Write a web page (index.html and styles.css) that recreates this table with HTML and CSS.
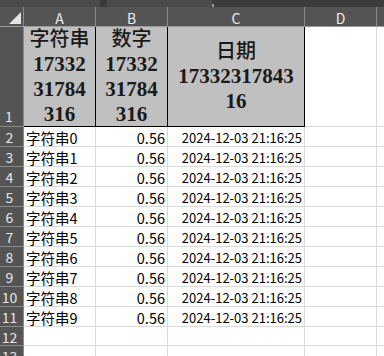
FILE: index.html
```html
<!DOCTYPE html>
<html>
<head>
<meta charset="utf-8">
<link rel="stylesheet" href="styles.css">
</head>
<body>
<div class="topbar">
  <div class="seg seg-name"></div>
  <div class="seg seg-gap"></div>
  <div class="seg seg-formula"></div>
  <div class="seg seg-tick"></div>
  <div class="seg seg-rest"></div>
</div>
<div class="sheet">
  <div class="ch corner"><span class="tri"></span></div>
  <div class="ch">A</div>
  <div class="ch">B</div>
  <div class="ch">C</div>
  <div class="ch">D</div>
  <div class="ch last"></div>

  <div class="rh rh1">1</div>
  <div class="hd"><div class="hd-text"><span class="cjk">字符串</span><br>17332<br>31784<br>316</div></div>
  <div class="hd"><div class="hd-text"><span class="cjk">数字</span><br>17332<br>31784<br>316</div></div>
  <div class="hd"><div class="hd-text"><span class="cjk">日期</span><br>17332317843<br>16</div></div>
  <div class="c"></div>
  <div class="c last"></div>

  <div class="rh">2</div><div class="c txt">字符串0</div><div class="c num">0.56</div><div class="c date">2024-12-03 21:16:25</div><div class="c"></div><div class="c last"></div>
  <div class="rh">3</div><div class="c txt">字符串1</div><div class="c num">0.56</div><div class="c date">2024-12-03 21:16:25</div><div class="c"></div><div class="c last"></div>
  <div class="rh">4</div><div class="c txt">字符串2</div><div class="c num">0.56</div><div class="c date">2024-12-03 21:16:25</div><div class="c"></div><div class="c last"></div>
  <div class="rh">5</div><div class="c txt">字符串3</div><div class="c num">0.56</div><div class="c date">2024-12-03 21:16:25</div><div class="c"></div><div class="c last"></div>
  <div class="rh">6</div><div class="c txt">字符串4</div><div class="c num">0.56</div><div class="c date">2024-12-03 21:16:25</div><div class="c"></div><div class="c last"></div>
  <div class="rh">7</div><div class="c txt">字符串5</div><div class="c num">0.56</div><div class="c date">2024-12-03 21:16:25</div><div class="c"></div><div class="c last"></div>
  <div class="rh">8</div><div class="c txt">字符串6</div><div class="c num">0.56</div><div class="c date">2024-12-03 21:16:25</div><div class="c"></div><div class="c last"></div>
  <div class="rh">9</div><div class="c txt">字符串7</div><div class="c num">0.56</div><div class="c date">2024-12-03 21:16:25</div><div class="c"></div><div class="c last"></div>
  <div class="rh">10</div><div class="c txt">字符串8</div><div class="c num">0.56</div><div class="c date">2024-12-03 21:16:25</div><div class="c"></div><div class="c last"></div>
  <div class="rh">11</div><div class="c txt">字符串9</div><div class="c num">0.56</div><div class="c date">2024-12-03 21:16:25</div><div class="c"></div><div class="c last"></div>
  <div class="rh">12</div><div class="c"></div><div class="c"></div><div class="c"></div><div class="c"></div><div class="c last"></div>
  <div class="rh">13</div><div class="c"></div><div class="c"></div><div class="c"></div><div class="c"></div><div class="c last"></div>
</div>
</body>
</html>
```

FILE: styles.css
```css
html, body {
  margin: 0;
  padding: 0;
  background: #ffffff;
  width: 384px;
  height: 356px;
  overflow: hidden;
}

.topbar {
  display: flex;
  height: 7px;
  background: #3c3c3c;
}
.seg { height: 7px; }
.seg-name { width: 100px; background: #4a4a4a; }
.seg-gap { width: 7px; background: #3a3a3a; }
.seg-formula { width: 105px; background: #4a4a4a; }
.seg-tick { width: 2px; background: #9a9a9a; height: 3px; align-self: flex-end; }
.seg-rest { flex: 1; background: #3c3c3c; }

.sheet {
  display: grid;
  grid-template-columns: 24px 72px 72px 137px 72px 1fr;
  grid-template-rows: 20px 100px repeat(10, 20px) 19px 20px;
  font-family: "Noto Sans CJK SC", "Noto Sans", sans-serif;
}

.sheet > div {
  box-sizing: border-box;
  border-right: 1px solid #d9d9d9;
  border-bottom: 1px solid #d9d9d9;
  overflow: hidden;
  white-space: nowrap;
}

.sheet > .ch {
  background: #545454;
  color: #ececec;
  font-size: 14px;
  display: flex;
  align-items: center;
  justify-content: center;
  padding-top: 3px;
  border-right: 1px solid #8a8a8a;
  border-bottom: 1px solid #9a9a9a;
}
.sheet > .ch.last { border-right: none; }

.corner { position: relative; }
.tri {
  position: absolute;
  right: 2px;
  bottom: 2px;
  width: 0;
  height: 0;
  border-left: 12px solid transparent;
  border-bottom: 12px solid #e4e4e4;
}

.sheet > .rh {
  background: #545454;
  color: #e6e6e6;
  font-size: 14px;
  display: flex;
  align-items: center;
  justify-content: center;
  padding-right: 4px;
  padding-top: 1px;
  border-right: 1px solid #8a8a8a;
  border-bottom: 1px solid #8a8a8a;
}
.sheet > .rh1 {
  align-items: flex-end;
  justify-content: flex-start;
  padding-left: 5px;
  padding-bottom: 0;
  line-height: 20px;
}

.sheet > .hd {
  background: #c0c0c0;
  border-right: 1px solid #000000;
  border-bottom: 1px solid #000000;
  font-family: "Liberation Serif", "Noto Sans CJK SC", serif;
  font-weight: bold;
  font-size: 21px;
  line-height: 25px;
  color: #1a1a1a;
  display: flex;
  align-items: center;
  justify-content: center;
}

.hd-text {
  text-align: center;
}

.cjk {
  font-weight: 500;
  font-size: 20px;
}

.sheet > .c {
  font-size: 14px;
  color: #000000;
  display: flex;
  align-items: center;
}
.sheet > .c.last { border-right: none; }

.sheet > .txt {
  padding-left: 2px;
  padding-top: 1px;
  font-size: 14.5px;
}
.sheet > .num {
  justify-content: flex-end;
  padding-right: 2px;
  padding-top: 1px;
  font-size: 14.5px;
}
.sheet > .date {
  justify-content: flex-end;
  padding-right: 2px;
  padding-top: 1px;
  font-size: 13px;
}
```
